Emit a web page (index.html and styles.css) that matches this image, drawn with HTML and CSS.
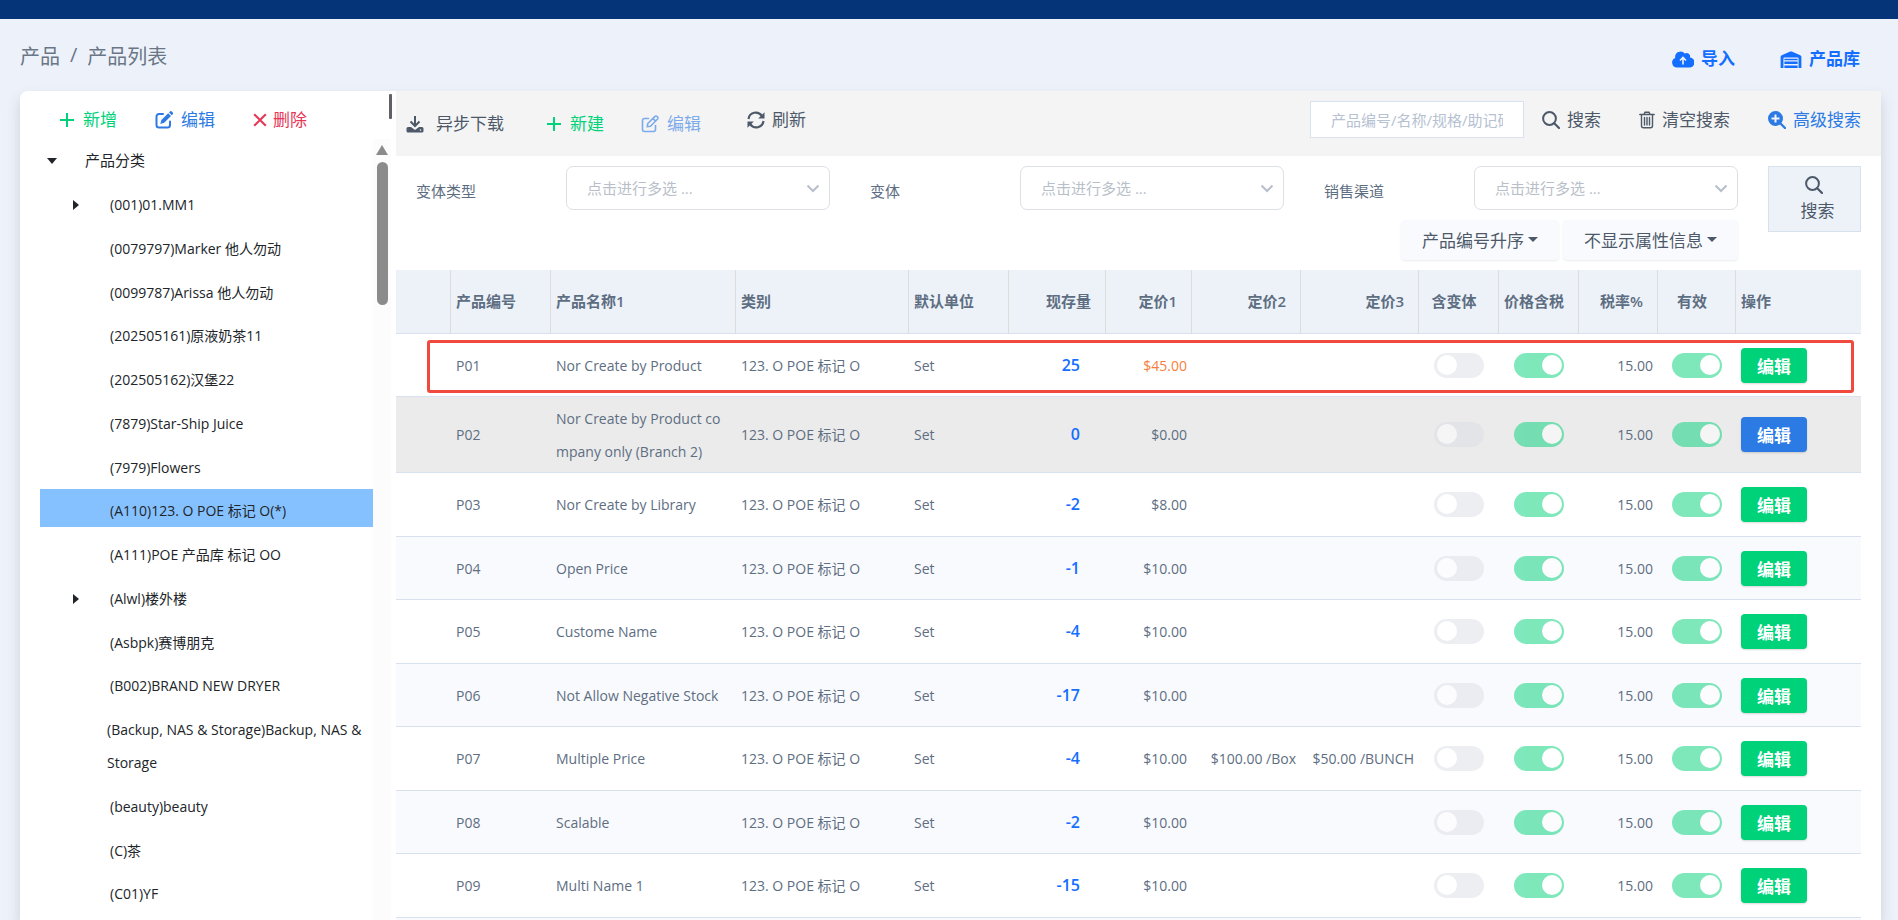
FILE: index.html
```html
<!DOCTYPE html>
<html lang="zh-CN">
<head>
<meta charset="utf-8">
<title>产品列表</title>
<link rel="stylesheet" href="styles.css">
</head>
<body>
<svg class="sprite" aria-hidden="true">
  <symbol id="i-plus" viewBox="0 0 16 16"><path d="M8 1v14M1 8h14" fill="none" stroke="currentColor" stroke-width="2"/></symbol>
  <symbol id="i-x" viewBox="2 2 12 12"><path d="M3 3l10 10M13 3L3 13" fill="none" stroke="currentColor" stroke-width="1.800"/></symbol>
  <symbol id="i-edit" viewBox="0 0 18 18"><path d="M8 3H4a2.500 2.500 0 0 0-2.500 2.500V14A2.500 2.500 0 0 0 4 16.500h8.500A2.500 2.500 0 0 0 15 14v-3.500" fill="none" stroke="currentColor" stroke-width="2" stroke-linecap="round"/><path d="M13.200 2.200l2.800 2.800-6.800 6.800-3.900 1.100 1.100-3.900zM14 1.400l1-1a1.300 1.300 0 0 1 1.800 0l1 1a1.300 1.300 0 0 1 0 1.800l-1 1z" fill="currentColor"/></symbol>
  <symbol id="i-edit-o" viewBox="0 0 18 18"><path d="M7.500 3.500H3.500A2 2 0 0 0 1.500 5.500v9a2 2 0 0 0 2 2h9a2 2 0 0 0 2-2v-4M14 1.400a1.400 1.400 0 0 1 2 0l.6.6a1.400 1.400 0 0 1 0 2L9.500 11.200l-3.300.6.600-3.300zM12 3.500l2.600 2.600" fill="none" stroke="currentColor" stroke-width="1.600" stroke-linecap="round" stroke-linejoin="round"/></symbol>
  <symbol id="i-down" viewBox="0 0 18 18"><path d="M9 1v9M4.500 6.500L9 11l4.500-4.500" fill="none" stroke="currentColor" stroke-width="2"/><path d="M2 12h3l4 3 4-3h3a1.500 1.500 0 0 1 1.500 1.500V16a1.500 1.500 0 0 1-1.500 1.500H2A1.500 1.500 0 0 1 .5 16v-2.500A1.500 1.500 0 0 1 2 12zm12.500 2.200a.8.8 0 1 0 0 1.600.8.8 0 0 0 0-1.600z" fill="currentColor" fill-rule="evenodd"/></symbol>
  <symbol id="i-sync" viewBox="0 0 18 18"><path d="M1.500 8A7.300 7.300 0 0 1 14.800 4.800M16.500 10A7.300 7.300 0 0 1 3.200 13.200" fill="none" stroke="currentColor" stroke-width="2.200"/><path d="M17.500 1.200V7.500h-6.300zM.5 16.800V10.500h6.300z" fill="currentColor"/></symbol>
  <symbol id="i-search" viewBox="0 0 18 18"><circle cx="7.500" cy="7.500" r="6.400" fill="none" stroke="currentColor" stroke-width="2"/><path d="M12.200 12.200l4.800 4.800" stroke="currentColor" stroke-width="2.200" stroke-linecap="round"/></symbol>
  <symbol id="i-zoom" viewBox="0 0 18 18"><path d="M7.500 0a7.500 7.500 0 1 1 0 15 7.500 7.500 0 0 1 0-15zM6.500 3.500v3h-3v2h3v3h2v-3h3v-2h-3v-3z" fill="currentColor" fill-rule="evenodd"/><path d="M12 12l5 5" stroke="currentColor" stroke-width="2.400" stroke-linecap="round"/></symbol>
  <symbol id="i-trash" viewBox="0 0 16 18"><path d="M.8 3.500h14.400M5 3.200l1-2h4l1 2M2.500 3.800v11a2 2 0 0 0 2 2h7a2 2 0 0 0 2-2v-11M5.500 6.500v7.500M8 6.500v7.500M10.500 6.500v7.500" fill="none" stroke="currentColor" stroke-width="1.400" stroke-linecap="round"/></symbol>
  <symbol id="i-cloud" viewBox="0 0 22 16"><path d="M5 16a5 5 0 0 1-1.800-9.600A5.500 5.500 0 0 1 12.800 2 3.500 3.500 0 0 1 18 6a4.900 4.900 0 0 1-1 10z" fill="currentColor"/><path d="M11 13V6.500M8 9l3-3 3 3" fill="none" stroke="#edf2fa" stroke-width="1.600"/></symbol>
  <symbol id="i-store" viewBox="0 0 22 18"><path d="M0 18V6.200a2 2 0 0 1 1.200-1.700L10.200.6a2 2 0 0 1 1.600 0l9 3.900A2 2 0 0 1 22 6.200V18h-3V8a1 1 0 0 0-1-1H4a1 1 0 0 0-1 1v10zM4 8.200h14v1.600H4zm0 3h14v2.600H4zm0 4.200h14V18H4z" fill="currentColor"/></symbol>
  <symbol id="i-chev" viewBox="0 0 14 14"><path d="M1.500 4.500L7 10l5.500-5.500" fill="none" stroke="currentColor" stroke-width="2"/></symbol>
</svg>

<header class="topbar"></header>

<div class="page-head">
  <nav class="crumbs" aria-label="导航"><span>产品</span><span>/</span><span>产品列表</span></nav>
  <div class="head-links">
    <a href="#"><svg class="ico-wide"><use href="#i-cloud"/></svg>导入</a>
    <a href="#"><svg class="ico-wide"><use href="#i-store"/></svg>产品库</a>
  </div>
</div>

<main class="card">
  <aside class="side">
    <div class="side-tools">
      <button class="tool green"><svg class="ico"><use href="#i-plus"/></svg>新增</button>
      <button class="tool blue"><svg class="ico"><use href="#i-edit"/></svg>编辑</button>
      <button class="tool red"><svg class="ico"><use href="#i-x"/></svg>删除</button>
      <span class="mini-thumb"></span>
    </div>
    <div class="tree-wrap">
      <ul class="tree">
        <li class="root"><i class="tri open"></i>产品分类</li>
        <li><i class="tri"></i>(001)01.MM1</li>
        <li>(0079797)Marker 他人勿动</li>
        <li>(0099787)Arissa 他人勿动</li>
        <li>(202505161)原液奶茶11</li>
        <li>(202505162)汉堡22</li>
        <li>(7879)Star-Ship Juice</li>
        <li>(7979)Flowers</li>
        <li class="selected">(A110)123. O POE 标记 O(*)</li>
        <li>(A111)POE 产品库 标记 OO</li>
        <li><i class="tri"></i>(Alwl)楼外楼</li>
        <li>(Asbpk)赛博朋克</li>
        <li>(B002)BRAND NEW DRYER</li>
        <li class="long">(Backup, NAS &amp; Storage)Backup, NAS &amp; Storage</li>
        <li>(beauty)beauty</li>
        <li>(C)茶</li>
        <li>(C01)YF</li>
      </ul>
      <div class="scrollbar"><i class="arrow"></i><i class="thumb"></i></div>
    </div>
  </aside>

  <section class="content">
    <div class="toolbar">
      <div class="actions">
        <button class="tool download"><svg class="ico"><use href="#i-down"/></svg>异步下载</button>
        <button class="tool green"><svg class="ico"><use href="#i-plus"/></svg>新建</button>
        <button class="tool blue faded"><svg class="ico"><use href="#i-edit-o"/></svg>编辑</button>
        <button class="tool refresh"><svg class="ico"><use href="#i-sync"/></svg>刷新</button>
      </div>
      <div class="finder">
        <input class="query" type="text" aria-label="产品搜索" placeholder="产品编号/名称/规格/助记码">
        <button class="tool"><svg class="ico"><use href="#i-search"/></svg>搜索</button>
        <button class="tool"><svg class="ico narrow"><use href="#i-trash"/></svg>清空搜索</button>
        <button class="tool blue"><svg class="ico"><use href="#i-zoom"/></svg>高级搜索</button>
      </div>
    </div>

    <div class="filters">
      <div class="filter-main">
        <div class="fields">
          <div class="field"><label for="f1">变体类型</label><span class="picker"><select id="f1"><option>点击进行多选 ...</option></select><svg><use href="#i-chev"/></svg></span></div>
          <div class="field"><label for="f2">变体</label><span class="picker"><select id="f2"><option>点击进行多选 ...</option></select><svg><use href="#i-chev"/></svg></span></div>
          <div class="field"><label for="f3">销售渠道</label><span class="picker"><select id="f3"><option>点击进行多选 ...</option></select><svg><use href="#i-chev"/></svg></span></div>
        </div>
        <div class="drops">
          <button class="drop">产品编号升序<i class="caret"></i></button>
          <button class="drop">不显示属性信息<i class="caret"></i></button>
        </div>
      </div>
      <button class="big-search"><svg class="ico"><use href="#i-search"/></svg><span>搜索</span></button>
    </div>

    <table class="grid">
      <colgroup><col class="c-sel"><col class="c-code"><col class="c-name"><col class="c-cat"><col class="c-unit"><col class="c-qty"><col class="c-p1"><col class="c-p2"><col class="c-p3"><col class="c-sw"><col class="c-sw"><col class="c-tax"><col class="c-valid"><col></colgroup>
      <thead>
        <tr><th></th><th>产品编号</th><th>产品名称1</th><th>类别</th><th>默认单位</th><th class="num">现存量</th><th class="num">定价1</th><th class="num">定价2</th><th class="num">定价3</th><th class="mid">含变体</th><th class="mid">价格含税</th><th class="num">税率%</th><th class="mid">有效</th><th>操作</th></tr>
      </thead>
      <tbody>
        <tr class="marked"><td></td><td>P01</td><td>Nor Create by Product</td><td>123. O POE 标记 O</td><td>Set</td><td class="qty">25</td><td class="num sale">$45.00</td><td></td><td></td><td class="mid"><input type="checkbox" class="switch" aria-label="含变体" disabled></td><td class="mid"><input type="checkbox" class="switch" aria-label="价格含税" checked disabled></td><td class="num">15.00</td><td class="mid"><input type="checkbox" class="switch" aria-label="有效" checked disabled></td><td><button class="edit">编辑</button></td></tr>
        <tr class="hovered"><td></td><td>P02</td><td>Nor Create by Product company only (Branch 2)</td><td>123. O POE 标记 O</td><td>Set</td><td class="qty">0</td><td class="num">$0.00</td><td></td><td></td><td class="mid"><input type="checkbox" class="switch" aria-label="含变体" disabled></td><td class="mid"><input type="checkbox" class="switch" aria-label="价格含税" checked disabled></td><td class="num">15.00</td><td class="mid"><input type="checkbox" class="switch" aria-label="有效" checked disabled></td><td><button class="edit">编辑</button></td></tr>
        <tr><td></td><td>P03</td><td>Nor Create by Library</td><td>123. O POE 标记 O</td><td>Set</td><td class="qty">-2</td><td class="num">$8.00</td><td></td><td></td><td class="mid"><input type="checkbox" class="switch" aria-label="含变体" disabled></td><td class="mid"><input type="checkbox" class="switch" aria-label="价格含税" checked disabled></td><td class="num">15.00</td><td class="mid"><input type="checkbox" class="switch" aria-label="有效" checked disabled></td><td><button class="edit">编辑</button></td></tr>
        <tr><td></td><td>P04</td><td>Open Price</td><td>123. O POE 标记 O</td><td>Set</td><td class="qty">-1</td><td class="num">$10.00</td><td></td><td></td><td class="mid"><input type="checkbox" class="switch" aria-label="含变体" disabled></td><td class="mid"><input type="checkbox" class="switch" aria-label="价格含税" checked disabled></td><td class="num">15.00</td><td class="mid"><input type="checkbox" class="switch" aria-label="有效" checked disabled></td><td><button class="edit">编辑</button></td></tr>
        <tr><td></td><td>P05</td><td>Custome Name</td><td>123. O POE 标记 O</td><td>Set</td><td class="qty">-4</td><td class="num">$10.00</td><td></td><td></td><td class="mid"><input type="checkbox" class="switch" aria-label="含变体" disabled></td><td class="mid"><input type="checkbox" class="switch" aria-label="价格含税" checked disabled></td><td class="num">15.00</td><td class="mid"><input type="checkbox" class="switch" aria-label="有效" checked disabled></td><td><button class="edit">编辑</button></td></tr>
        <tr><td></td><td>P06</td><td>Not Allow Negative Stock</td><td>123. O POE 标记 O</td><td>Set</td><td class="qty">-17</td><td class="num">$10.00</td><td></td><td></td><td class="mid"><input type="checkbox" class="switch" aria-label="含变体" disabled></td><td class="mid"><input type="checkbox" class="switch" aria-label="价格含税" checked disabled></td><td class="num">15.00</td><td class="mid"><input type="checkbox" class="switch" aria-label="有效" checked disabled></td><td><button class="edit">编辑</button></td></tr>
        <tr><td></td><td>P07</td><td>Multiple Price</td><td>123. O POE 标记 O</td><td>Set</td><td class="qty">-4</td><td class="num">$10.00</td><td class="num">$100.00 /Box</td><td class="num">$50.00 /BUNCH</td><td class="mid"><input type="checkbox" class="switch" aria-label="含变体" disabled></td><td class="mid"><input type="checkbox" class="switch" aria-label="价格含税" checked disabled></td><td class="num">15.00</td><td class="mid"><input type="checkbox" class="switch" aria-label="有效" checked disabled></td><td><button class="edit">编辑</button></td></tr>
        <tr><td></td><td>P08</td><td>Scalable</td><td>123. O POE 标记 O</td><td>Set</td><td class="qty">-2</td><td class="num">$10.00</td><td></td><td></td><td class="mid"><input type="checkbox" class="switch" aria-label="含变体" disabled></td><td class="mid"><input type="checkbox" class="switch" aria-label="价格含税" checked disabled></td><td class="num">15.00</td><td class="mid"><input type="checkbox" class="switch" aria-label="有效" checked disabled></td><td><button class="edit">编辑</button></td></tr>
        <tr><td></td><td>P09</td><td>Multi Name 1</td><td>123. O POE 标记 O</td><td>Set</td><td class="qty">-15</td><td class="num">$10.00</td><td></td><td></td><td class="mid"><input type="checkbox" class="switch" aria-label="含变体" disabled></td><td class="mid"><input type="checkbox" class="switch" aria-label="价格含税" checked disabled></td><td class="num">15.00</td><td class="mid"><input type="checkbox" class="switch" aria-label="有效" checked disabled></td><td><button class="edit">编辑</button></td></tr>
        <tr><td colspan="14"></td></tr>
      </tbody>
    </table>
  </section>
</main>
</body>
</html>
```
FILE: styles.css
```css
* { box-sizing: border-box; }

body {
  margin: 0;
  height: 100vh;
  overflow: hidden;
  display: flex;
  flex-direction: column;
  background: #edf2fa;
  color: #5e6e82;
  font-family: "Open Sans", "Noto Sans CJK SC", sans-serif;
  font-size: 14px;
}

button, input, select { font-family: inherit; }
button { border: 0; background: none; padding: 0; cursor: pointer; }
.sprite { position: absolute; width: 0; height: 0; }
.ico { width: 18px; height: 18px; flex: none; }
.narrow { width: 16px; }

.topbar { height: 19px; flex: none; background: #063478; }

.page-head {
  flex: none;
  height: 72px;
  padding: 0 38px 0 20px;
  display: flex;
  justify-content: space-between;
  align-items: center;
}
.crumbs { display: flex; gap: 10px; font-size: 20px; color: #6a7686; }
.head-links { display: flex; gap: 45px; padding-top: 8px; }
.head-links a {
  display: flex;
  align-items: center;
  gap: 7px;
  color: #146eff;
  font-size: 17px;
  font-weight: 700;
  line-height: 24px;
  text-decoration: none;
}
.ico-wide { width: 22px; height: 17px; }

.card {
  flex: 1;
  min-height: 0;
  margin: 0 17px 0 20px;
  display: flex;
  background: #fff;
  border-radius: 8px 0 0 0;
  box-shadow: 0 7px 14px rgba(65, 69, 88, 0.2);
}

/* category tree */
.side { width: 376px; flex: none; display: flex; flex-direction: column; }
.side-tools {
  height: 48px;
  flex: none;
  display: flex;
  align-items: center;
  gap: 38px;
  padding: 9px 0 0 39px;
}
.tool {
  display: inline-flex;
  align-items: center;
  gap: 8px;
  color: #4d5969;
  font-size: 17px;
  line-height: 24px;
  white-space: nowrap;
}
.green { color: #00d27a; }
.blue { color: #2c7be5; }
.red { color: #e63757; gap: 6px; }
.faded { opacity: 0.6; }
.green .ico { width: 16px; height: 16px; }
.red .ico { width: 14px; height: 14px; }
.mini-thumb {
  width: 3px;
  height: 25px;
  margin: 0 4px 20px auto;
  align-self: flex-end;
  background: #5f6166;
  border-radius: 1px;
}
.tree-wrap { flex: 1; min-height: 0; display: flex; padding-left: 20px; margin-right: 5px; overflow: hidden; }
.tree { flex: 1; list-style: none; margin: 0; padding: 0; color: #212529; }
.tree li {
  display: flex;
  align-items: center;
  padding: 5px 0 0 70px;
  margin-bottom: 6px;
  line-height: 33px;
}
.tree li:nth-child(4n) { margin-bottom: 5px; }
.tree .root { padding: 5px 0 0 7px; gap: 28px; font-size: 15px; }
.tree .long { padding-left: 67px; }
.tree .selected { background: #86c1ff; }
.tri { border: 5px solid transparent; border-left: 6px solid #212529; border-right: 0; margin: 0 31px 0 -37px; }
.tri.open { border: 5px solid transparent; border-top: 6px solid #212529; border-bottom: 0; margin: 0; }
.scrollbar { width: 18px; background: #fcfcfc; display: flex; flex-direction: column; align-items: center; gap: 7px; padding-top: 6px; }
.arrow { border: 6px solid transparent; border-bottom: 10px solid #8b8b8b; border-top: 0; }
.thumb { width: 11px; height: 143px; border-radius: 6px; background: #8b8b8b; }

/* toolbar */
.content { flex: 1; min-width: 0; }
.toolbar {
  height: 65px;
  padding: 0 20px 0 10px;
  display: flex;
  justify-content: space-between;
  align-items: flex-start;
  background: #f4f4f4;
}
.actions { display: flex; gap: 40px; padding-top: 21px; }
.actions .green { margin: 0 -3px 0 2px; }
.download { gap: 12px; }
.refresh { gap: 7px; margin: 0 0 8px 6px; height: 16px; }
.finder { display: flex; align-items: center; gap: 38px; padding-top: 10px; }
.finder .tool { gap: 7px; }
.query {
  width: 214px;
  height: 37px;
  margin-right: -20px;
  padding: 0 20px;
  border: 1px solid #d8e2ef;
  background: #fff;
  font-size: 15px;
}
.query::placeholder { color: #b6c1d2; }

/* filters */
.filters { display: flex; gap: 30px; padding: 10px 20px; align-items: flex-start; }
.filter-main { flex: 1; display: flex; flex-direction: column; gap: 10px; }
.fields { display: grid; grid-template-columns: repeat(3, 1fr); gap: 40px; }
.field { display: flex; align-items: center; }
.field label { width: 150px; padding-top: 4px; font-size: 15px; }
.picker { flex: 1; display: grid; align-items: center; }
.picker select {
  grid-area: 1 / 1;
  height: 44px;
  width: 100%;
  padding: 0 20px;
  appearance: none;
  border: 1px solid #dcdfe6;
  border-radius: 7px;
  background: #fff;
  color: #b8bfca;
  font-size: 15px;
}
.picker svg { grid-area: 1 / 1; justify-self: end; width: 14px; height: 14px; margin-right: 10px; color: #b8bfca; pointer-events: none; }
.drops { display: flex; justify-content: flex-end; gap: 4px; }
.drop {
  display: flex;
  align-items: center;
  gap: 4px;
  height: 40px;
  padding: 0 21px 2px;
  border-radius: 4px;
  background: #f9fafd;
  box-shadow: 0 1px 2px rgba(0, 0, 0, 0.08);
  color: #4d5969;
  font-size: 17px;
}
.caret { border: 5px solid transparent; border-top-color: #4d5969; border-bottom: 0; }
.big-search {
  width: 93px;
  height: 66px;
  padding: 1px 0 0;
  display: flex;
  flex-direction: column;
  align-items: center;
  border: 1px solid #d8e2ef;
  background: #edf2f9;
  color: #4d5969;
  font-size: 17px;
  line-height: 34px;
}
.big-search .ico { margin: 8px 2px 0 0; }
.big-search span { padding-left: 6px; }

/* product table */
.grid { width: calc(100% - 20px); table-layout: fixed; border-collapse: separate; border-spacing: 0; }
.c-sel { width: 55px; }
.c-code, .c-unit { width: 100px; }
.c-name { width: 185px; }
.c-cat { width: 173px; }
.c-qty { width: 97px; }
.c-p1 { width: 86px; }
.c-p2 { width: 109px; }
.c-p3 { width: 118px; }
.c-sw { width: 80px; }
.c-tax { width: 79px; }
.c-valid { width: 78px; }
.grid th {
  height: 64px;
  padding: 0 5px 2px;
  background: #edf2f9;
  border-bottom: 1px solid #d8e2ef;
  border-right: 1px solid #dcdcdc;
  font-size: 15px;
  font-weight: 600;
  text-align: left;
  white-space: nowrap;
}
.grid th:last-child { border-right: 0; }
.grid th.num { text-align: right; padding-right: 14px; }
.grid th.mid { text-align: center; padding-right: 14px; }
.grid td {
  height: 64px;
  padding: 4px 5px;
  border-bottom: 1px solid #d8e2ef;
  line-height: 33px;
  word-break: break-all;
}
.grid tr:nth-child(even) td { height: 63px; background: #f9fafd; }
.grid tr.marked td { height: 63px; }
.grid tr.hovered td { height: 76px; background: #ebebeb; }
.grid td.num { text-align: right; white-space: nowrap; }
.grid td.mid { text-align: center; }
.grid td.qty { text-align: right; padding-right: 26px; color: #146eff; font-size: 16px; font-weight: 600; }
.grid td.sale { color: #f5803e; }
.marked { position: relative; }
.marked td:first-child::after {
  content: "";
  position: absolute;
  inset: 6px 7px 4px 31px;
  border: 3px solid #f04a3e;
  border-radius: 3px;
  pointer-events: none;
}
.switch {
  appearance: none;
  display: block;
  width: 50px;
  height: 25px;
  margin: 0 auto;
  padding: 2px 2px 3px 3px;
  border-radius: 13px;
  background: #dcdfe6;
  opacity: 0.5;
}
.switch::before { content: ""; display: block; width: 20px; height: 20px; border-radius: 50%; background: #fff; }
.switch:checked { background: #00d27a; }
.switch:checked::before { margin-left: auto; }
.edit {
  display: block;
  width: 66px;
  height: 35px;
  border-radius: 4px;
  background: #00d27a;
  box-shadow: 0 1px 2px rgba(0, 0, 0, 0.15);
  color: #fff;
  font-size: 17px;
  font-weight: 600;
}
.hovered .edit { background: #2c7be5; }
```
